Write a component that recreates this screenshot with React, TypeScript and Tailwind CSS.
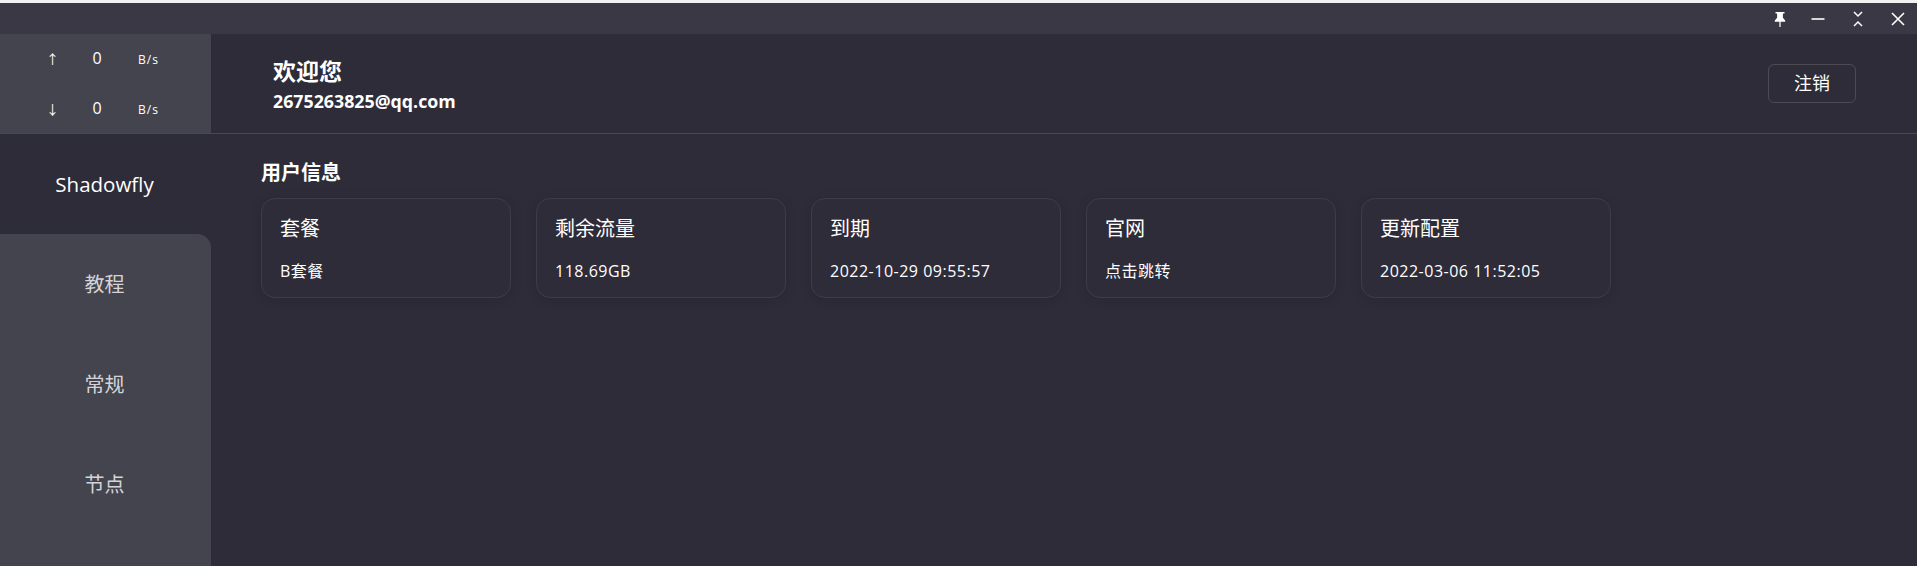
import React from "react";

const font = { fontFamily: '"Open Sans", "Noto Sans CJK SC", sans-serif' };

const cards = [
  ["套餐", "B套餐"],
  ["剩余流量", "118.69GB"],
  ["到期", "2022-10-29 09:55:57"],
  ["官网", "点击跳转"],
  ["更新配置", "2022-03-06 11:52:05"],
];

function Speed({ arrow }: { arrow: string }) {
  return (
    <div className="flex h-[50px] items-center text-white">
      <span className="ml-[46px] w-[12px] text-center text-[13px] leading-none">{arrow}</span>
      <span className="ml-[29px] w-[20px] pb-[2px] text-center text-[16px] leading-none">0</span>
      <span className="ml-[31px] pt-[2px] text-[12px] leading-none tracking-[1px]">B/s</span>
    </div>
  );
}

export default function App() {
  return (
    <div className="flex h-[566px] w-[1917px] flex-col overflow-hidden bg-[#2e2c39]" style={font}>
      <div className="h-[3px] bg-[#f1f1f1]" />
      <div className="flex h-[31px] items-center justify-end bg-[#393844] text-white">
        <svg width="16" height="16" viewBox="0 0 16 16" className="mr-[22px]" fill="white">
          <path d="M3.5 1h9v1.6h-1.6v4.2l2.3 2.6v1.4H8.6V16H7.4v-5.2H2.8V9.4l2.3-2.6V2.6H3.5z" />
        </svg>
        <svg width="16" height="16" viewBox="0 0 16 16" className="mr-[24px]" stroke="white" strokeWidth="1.6">
          <path d="M1.5 8h13" />
        </svg>
        <svg width="16" height="16" viewBox="0 0 16 16" className="mr-[24px]" fill="none" stroke="white" strokeWidth="1.5">
          <path d="M4 1l4 4 4-4M4 15l4-4 4 4" />
        </svg>
        <svg width="16" height="16" viewBox="0 0 16 16" className="mr-[11px]" stroke="white" strokeWidth="1.6">
          <path d="M2 2l12 12M14 2L2 14" />
        </svg>
      </div>
      <div className="flex h-[100px] border-b border-[#494852]">
        <div className="h-[99px] w-[211px] bg-[#44444f]">
          <Speed arrow="↑" />
          <Speed arrow="↓" />
        </div>
        <div className="ml-[62px] flex flex-col pt-[21px] text-white">
          <div className="text-[23px] leading-[32px] font-bold">欢迎您</div>
          <div className="mt-[2px] text-[17.8px] leading-[24px] font-bold">2675263825@qq.com</div>
        </div>
        <button className="mt-[30px] mr-[61px] ml-auto h-[39px] w-[88px] rounded-[6px] border border-[#4d4b52] text-[18px] text-white">
          注销
        </button>
      </div>
      <div className="flex flex-1">
        <div className="flex w-[211px] flex-col">
          <div className="flex h-[100px] items-center justify-center pr-[2px] text-[20.5px] text-white">Shadowfly</div>
          <div className="flex-1 rounded-tr-[14px] bg-[#44444f] pt-[1px] pr-[2px] text-[20px] text-[#d4d4d6]">
            <div className="flex h-[100px] items-center justify-center">教程</div>
            <div className="flex h-[100px] items-center justify-center">常规</div>
            <div className="flex h-[99px] items-center justify-center">节点</div>
          </div>
        </div>
        <div className="pl-[50px]">
          <div className="pt-[26px] text-[20px] leading-[26px] font-bold text-white">用户信息</div>
          <div className="mt-[12px] flex gap-[25px]">
            {cards.map(([title, value]) => (
              <div
                key={title}
                className="flex h-[100px] w-[250px] flex-col rounded-[14px] border border-[#3d3c47] px-[18px] pt-[16px] text-white shadow-[0_2px_12px_rgba(0,0,0,0.12)]"
              >
                <div className="text-[20px] leading-[28px]">{title}</div>
                <div className="mt-[17px] text-[16px] leading-[22px] tracking-[0.5px]">{value}</div>
              </div>
            ))}
          </div>
        </div>
      </div>
    </div>
  );
}
